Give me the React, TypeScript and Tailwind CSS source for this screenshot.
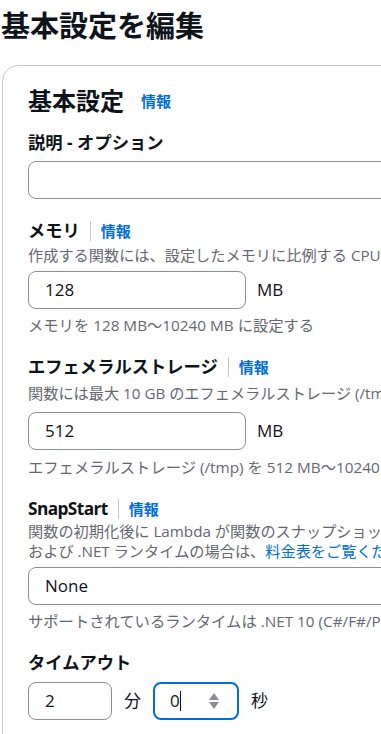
import React from "react";

const font = "font-['Open_Sans','Noto_Sans_CJK_JP',sans-serif]";

function Info() {
  return <a className="text-[15px] font-bold text-[#006ce0]">情報</a>;
}

function Label({ text, info, className }: { text: string; info?: boolean; className?: string }) {
  return (
    <div className="flex items-center h-[22px]">
      <span className={"text-[17.3px] font-bold text-[#0f141a] leading-[22px] " + (className ?? "")}>{text}</span>
      {info && (
        <>
          <span className="mx-[10px] h-[20px] border-l border-[#c6c6cd]" />
          <Info />
        </>
      )}
    </div>
  );
}

function Desc({ children, className }: { children: React.ReactNode; className?: string }) {
  return (
    <div className={"text-[15.2px] leading-[20px] text-[#656871] whitespace-nowrap " + (className ?? "")}>
      {children}
    </div>
  );
}

function Help({ children }: { children: React.ReactNode }) {
  return <div className="text-[15.3px] leading-[20px] text-[#656871] whitespace-nowrap">{children}</div>;
}

function Box({ value, className }: { value?: string; className?: string }) {
  return (
    <div
      className={
        "h-[38px] rounded-[8px] border border-[#8c8c94] bg-white flex items-center pl-[16px] text-[17px] text-[#0f141a] " +
        (className ?? "")
      }
    >
      {value}
    </div>
  );
}

export default function App() {
  return (
    <div className={`w-[381px] h-[734px] overflow-hidden bg-white ${font}`}>
      <div className="w-[900px] pl-[1px]">
        <h1 className="text-[29px] font-bold leading-[36px] text-[#0f141a] pt-[8px]">基本設定を編集</h1>

        <div className="mt-[21px] ml-[1px] rounded-[16px] border border-[#c6c6cd] pl-[25px] pt-[19px] pb-[40px]">
          <div className="flex items-center h-[32px] gap-[17px]">
            <h2 className="text-[24px] font-bold text-[#0f141a] leading-[32px]">基本設定</h2>
            <Info />
          </div>

          <div className="mt-[15px]">
            <Label text="説明 - オプション" />
            <Box className="mt-[7px] w-[600px]" />
          </div>

          <div className="mt-[21px]">
            <Label text="メモリ" info />
            <Desc className="mt-[3px]">作成する関数には、設定したメモリに比例する CPU が割り当てられます。</Desc>
            <div className="mt-[6px] flex items-center">
              <Box value="128" className="w-[218px]" />
              <span className="ml-[11px] text-[17px] text-[#0f141a]">MB</span>
            </div>
            <div className="mt-[6px]">
              <Help>メモリを 128 MB～10240 MB に設定する</Help>
            </div>
          </div>

          <div className="mt-[21px]">
            <Label text="エフェメラルストレージ" info />
            <Desc className="mt-[5px]">関数には最大 10 GB のエフェメラルストレージ (/tmp) を設定できます。</Desc>
            <div className="mt-[9px] flex items-center">
              <Box value="512" className="w-[218px]" />
              <span className="ml-[11px] text-[17px] text-[#0f141a]">MB</span>
            </div>
            <div className="mt-[7px]">
              <Help>エフェメラルストレージ (/tmp) を 512 MB～10240 MB に設定する</Help>
            </div>
          </div>

          <div className="mt-[21px]">
            <Label text="SnapStart" info className="tracking-[-0.6px]" />
            <Desc className="mt-[1px]">関数の初期化後に Lambda が関数のスナップショットを作成します。Java、Python</Desc>
            <Desc>
              および .NET ランタイムの場合は、<span className="text-[#006ce0]">料金表をご覧ください</span>
            </Desc>
            <Box value="None" className="mt-[6px] w-[600px]" />
            <div className="mt-[6px]">
              <Help>サポートされているランタイムは .NET 10 (C#/F#/PowerShell)、Java 11 以降です。</Help>
            </div>
          </div>

          <div className="mt-[21px]">
            <Label text="タイムアウト" />
            <div className="mt-[8px] flex items-center">
              <Box value="2" className="w-[84px]" />
              <span className="ml-[12px] text-[17px] text-[#0f141a]">分</span>
              <div className="ml-[12px] w-[86px] h-[38px] rounded-[8px] border-2 border-[#006ce0] flex items-center pl-[15px] pr-[18px] text-[17px] text-[#0f141a]">
                <span>0</span>
                <span className="w-px h-[20px] bg-[#0f141a]" />
                <span className="ml-auto flex flex-col gap-[2px]">
                  <svg width="10" height="7" viewBox="0 0 10 7">
                    <path d="M5 0L10 7H0z" fill="#8c8c94" />
                  </svg>
                  <svg width="10" height="7" viewBox="0 0 10 7">
                    <path d="M0 0H10L5 7z" fill="#8c8c94" />
                  </svg>
                </span>
              </div>
              <span className="ml-[12px] text-[17px] text-[#0f141a]">秒</span>
            </div>
          </div>
        </div>
      </div>
    </div>
  );
}
